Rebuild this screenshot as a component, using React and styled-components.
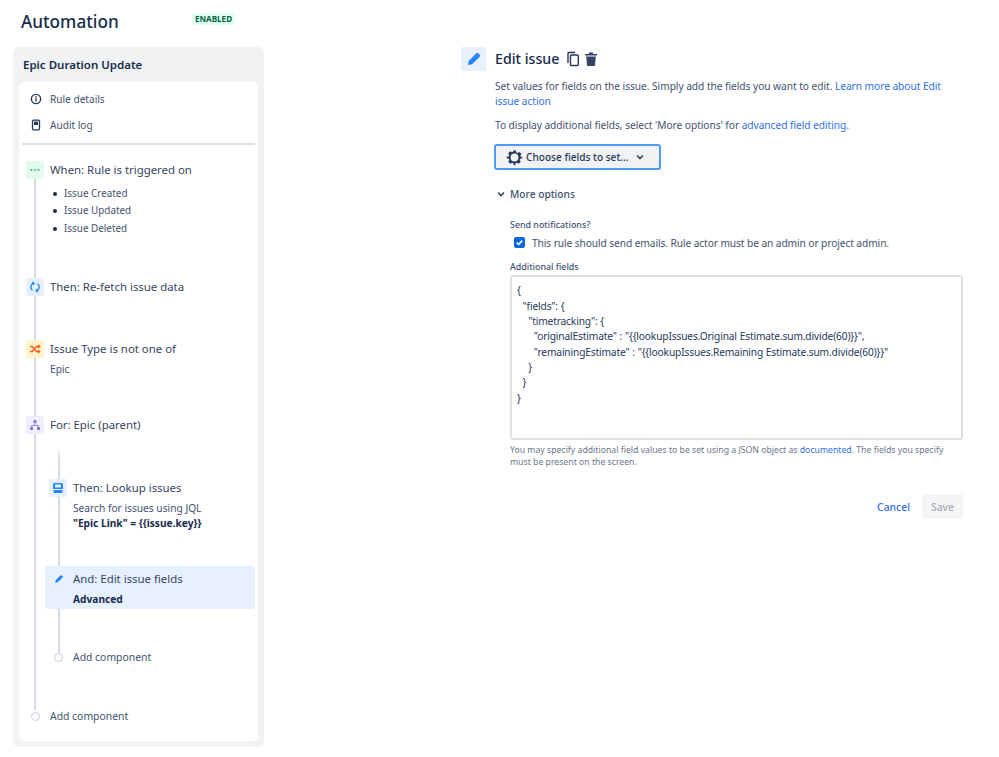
import React from "react";
import styled, { createGlobalStyle } from "styled-components";

const Global = createGlobalStyle`
  html, body { margin: 0; padding: 0; background: #fff; }
  body { font-family: "Noto Sans", "Open Sans", sans-serif; color: #172b4d; overflow: hidden; }
  * { box-sizing: border-box; }
`;

const Page = styled.div`
  width: 999px; height: 757px; padding: 0 36px 0 13px;
  display: grid; grid-template-columns: 251px 1fr; column-gap: 197px;
`;
const LeftCol = styled.div`display: flex; flex-direction: column;`;
const Header = styled.div`
  height: 47px; display: flex; align-items: flex-start; padding: 10px 0 0 8px;
`;
const H1 = styled.h1`
  margin: 0; font-size: 17.2px; line-height: 24px; font-weight: 500; color: #172b4d; width: 171px;
`;
const Badge = styled.span`
  margin-top: 3px; height: 12px; padding: 0 3px; border-radius: 3px; background: #e3fcef; color: #006644;
  font-size: 8.1px; line-height: 12px; font-weight: 700;
`;
const Panel = styled.div`
  width: 251px; height: 700px; background: #f1f2f4; border-radius: 6px; padding: 0 6px 6px;
  display: flex; flex-direction: column;
`;
const PanelTitle = styled.div`
  height: 35px; padding: 9px 0 0 4px; font-size: 11.5px; line-height: 17px; font-weight: 600; color: #172b4d;
`;
const Inner = styled.div`
  flex: 1; background: #fff; border-radius: 5px; padding: 4px 3px 0;
`;
const NavRow = styled.div`
  height: 26px; display: flex; align-items: center; gap: 8px; padding-left: 8px;
  font-size: 10.1px; color: #42526e;
  svg { flex: none; }
`;
const Divider = styled.div`height: 2px; background: #dfe1e6; margin: 5px 0 0;`;
const Timeline = styled.div`
  position: relative; padding-top: 16px;
  &::before {
    content: ""; position: absolute; left: 12px; top: 34px; height: 531px; width: 1.5px; background: #d5d9e2;
  }
`;
const Step = styled.div`
  position: relative; display: flex; gap: 6px; padding-left: 4px; min-height: ${p => p.$h}px;
`;
const IconBox = styled.div`
  flex: none; width: 18px; height: 18px; border-radius: 2px; background: ${p => p.$bg};
  display: flex; align-items: center; justify-content: center;
`;
const StepBody = styled.div`display: flex; flex-direction: column; min-width: 0;`;
const StepTitle = styled.div`
  font-size: 11.4px; line-height: 18px; color: #344563; white-space: nowrap;
`;
const Items = styled.ul`
  margin: 6px 0 0; padding: 0 0 0 3px; list-style: none; font-size: 9.9px; line-height: 17.4px; color: #42526e;
`;
const Item = styled.li`
  display: flex; align-items: center; gap: 7px;
  &::before { content: ""; width: 4px; height: 4px; border-radius: 50%; background: #172b4d; }
`;
const SubText = styled.div`
  font-size: 10.2px; line-height: 15px; color: #42526e; margin-top: ${p => p.$mt || 0}px;
`;
const Strong = styled.div`font-size: 10.2px; line-height: 15px; font-weight: 700; color: #172b4d;`;
const Nested = styled.div`
  position: relative; margin-left: 26px; padding-top: 45px; height: 239px;
  &::before {
    content: ""; position: absolute; left: 10px; top: 13px; height: 208px; width: 1.5px;
    background: linear-gradient(to bottom, #fff, #d5d9e2 14px);
  }
`;
const NestedStep = styled(Step)`padding-left: 0; margin-left: 1px;`;
const Selected = styled.div`
  position: relative; width: 210px; height: 43px; margin: 0 0 0 -3px; padding-left: 28px;
  background: #e6f0ff; border-radius: 3px;
  svg { position: absolute; left: 9px; top: 8px; }
`;
const SelectedTitle = styled(StepTitle)`padding-top: 4px; height: 26px;`;
const AddRow = styled.div`
  position: relative; display: flex; align-items: center; gap: ${p => p.$gap}px;
  font-size: 10.4px; line-height: 14px; color: #42526e;
  margin-top: ${p => p.$mt}px; margin-left: ${p => p.$ml}px;
`;
const Dot = styled.span`
  flex: none; width: 9px; height: 9px; border-radius: 50%; border: 1.5px solid #c9ced8; background: #fff;
`;

const RightCol = styled.div`padding-top: 47px; display: flex; flex-direction: column;`;
const TitleRow = styled.div`display: flex; align-items: center; height: 24px;`;
const BigIcon = styled.div`
  width: 25px; height: 24px; border-radius: 2px; background: #e6f0ff; margin-right: 9px;
  display: flex; align-items: center; justify-content: center;
`;
const H2 = styled.h2`
  margin: 0 7px 0 0; font-size: 14.2px; font-weight: 500; line-height: 24px; color: #172b4d; white-space: nowrap;
`;
const Content = styled.div`padding-left: 34px; display: flex; flex-direction: column;`;
const Para = styled.p`
  margin: ${p => p.$mt}px 0 0; font-size: 10.2px; line-height: 15.4px; letter-spacing: -0.05px; color: #42526e;
`;
const A = styled.a`color: #2f6fe4; text-decoration: none;`;
const ChooseBtn = styled.button`
  margin: 11px 0 0 -1px; width: 167px; height: 26px; background: #f1f2f4; border: 2px solid #4c9aff; border-radius: 3px;
  display: flex; align-items: center; gap: 3px; padding: 0 0 0 10px;
  font-family: inherit; font-size: 10.1px; font-weight: 500; color: #253858; white-space: nowrap;
`;
const MoreRow = styled.div`
  display: flex; align-items: center; gap: 4px; margin-top: 16px; height: 16px; padding-left: 1px;
  font-size: 10.2px; font-weight: 500; color: #42526e;
`;
const Form = styled.div`padding-left: 15px; display: flex; flex-direction: column;`;
const Label = styled.div`
  font-size: 8.9px; line-height: 12px; font-weight: 500; color: #42526e; margin-top: ${p => p.$mt}px;
`;
const CheckRow = styled.div`
  display: flex; align-items: center; gap: 7px; padding-left: 4px; margin-top: 4px; height: 15px;
  font-size: 10.2px; letter-spacing: -0.09px; color: #42526e; white-space: nowrap;
`;
const Box = styled.span`
  width: 11px; height: 11px; border-radius: 2px; background: #0c66e4; display: flex; align-items: center; justify-content: center;
`;
const Code = styled.div`
  margin-top: 2px; width: 453px; height: 165px; border: 2px solid #dfe1e6; border-radius: 3px;
  padding: 6px 5px; font-size: 10.2px; line-height: 15.35px; letter-spacing: -0.15px; word-spacing: 0.3px; color: #253858; white-space: pre;
`;
const Help = styled.div`
  margin-top: 5px; width: 453px; font-size: 8.7px; line-height: 11.5px; color: #6b778c;
`;
const Actions = styled.div`
  margin-top: 26px; width: 453px; display: flex; justify-content: flex-end; align-items: center; gap: 12px;
`;
const Cancel = styled.span`font-size: 10.4px; font-weight: 500; color: #2f6fe4;`;
const Save = styled.button`
  width: 41px; height: 25px; border: 0; border-radius: 3px; background: #f4f5f7; color: #a5adba;
  font-family: inherit; font-size: 10.4px; font-weight: 500; padding: 0;
`;
const ChevronWrap = styled.span`display: flex; margin-left: 4px;`;
const TrashIcon = styled.svg`margin-left: 4px;`;

const Pencil = ({ s = 12 }) => (
  <svg width={s} height={s} viewBox="0 0 24 24" fill="#2684ff">
    <path d="M3 21l1-6L15.5 3.500a2.100 2.100 0 0 1 3 0l2 2a2.100 2.100 0 0 1 0 3L9 20z" />
  </svg>
);
const Chevron = ({ s = 10, c = "#344563" }) => (
  <svg width={s} height={s} viewBox="0 0 10 10" fill="none" stroke={c} strokeWidth="1.6">
    <path d="M2 3.500L5 6.500L8 3.500" />
  </svg>
);

const code = `{
  "fields": {
    "timetracking": {
      "originalEstimate" : "{{lookupIssues.Original Estimate.sum.divide(60)}}",
      "remainingEstimate" : "{{lookupIssues.Remaining Estimate.sum.divide(60)}}"
    }
  }
}`;

export default function App() {
  return (
    <Page>
      <Global />
      <LeftCol>
        <Header>
          <H1>Automation</H1>
          <Badge>ENABLED</Badge>
        </Header>
        <Panel>
          <PanelTitle>Epic Duration Update</PanelTitle>
          <Inner>
            <NavRow>
              <svg width="12" height="12" viewBox="0 0 12 12" fill="none">
                <circle cx="6" cy="6" r="4.600" stroke="#253858" strokeWidth="1.400" />
                <rect x="5.300" y="5.200" width="1.400" height="3.200" fill="#253858" />
                <rect x="5.300" y="3.200" width="1.400" height="1.300" fill="#253858" />
              </svg>
              Rule details
            </NavRow>
            <NavRow>
              <svg width="12" height="12" viewBox="0 0 12 12" fill="none">
                <rect x="2.500" y="1.200" width="7" height="9.600" rx="1" stroke="#253858" strokeWidth="1.300" />
                <rect x="4" y="2.600" width="4" height="3.400" fill="#253858" />
              </svg>
              Audit log
            </NavRow>
            <Divider />
            <Timeline>
              <Step $h={117}>
                <IconBox $bg="#e3fcef">
                  <svg width="12" height="4" viewBox="0 0 12 4" fill="#36b37e">
                    <circle cx="2.500" cy="2" r="1" /><circle cx="6" cy="2" r="1" /><circle cx="9.500" cy="2" r="1" />
                  </svg>
                </IconBox>
                <StepBody>
                  <StepTitle>When: Rule is triggered on</StepTitle>
                  <Items>
                    <Item>Issue Created</Item>
                    <Item>Issue Updated</Item>
                    <Item>Issue Deleted</Item>
                  </Items>
                </StepBody>
              </Step>
              <Step $h={62}>
                <IconBox $bg="#e6f0ff">
                  <svg width="12" height="12" viewBox="0 0 12 12" fill="none" stroke="#2684ff" strokeWidth="1.400">
                    <path d="M3.500 9.300A4 4 0 0 1 3 3.200L4.600 2.300" />
                    <path d="M8.500 2.700A4 4 0 0 1 9 8.800L7.400 9.700" />
                    <path d="M3.200 1.200L5 2.300L4 4" />
                    <path d="M8.800 10.800L7 9.700L8 8" />
                  </svg>
                </IconBox>
                <StepTitle>Then: Re-fetch issue data</StepTitle>
              </Step>
              <Step $h={76}>
                <IconBox $bg="#fff4cc">
                  <svg width="12" height="12" viewBox="0 0 12 12" fill="none" stroke="#ff5c1a" strokeWidth="1.300">
                    <path d="M1 3.500H3.200L7.500 8.500H10.500" />
                    <path d="M1 8.500H3.200L7.500 3.500H10.500" />
                    <path d="M9 2L10.800 3.500L9 5" />
                    <path d="M9 7L10.800 8.500L9 10" />
                  </svg>
                </IconBox>
                <StepBody>
                  <StepTitle>Issue Type is not one of</StepTitle>
                  <SubText $mt={4}>Epic</SubText>
                </StepBody>
              </Step>
              <Step $h={18}>
                <IconBox $bg="#f1edff">
                  <svg width="12" height="12" viewBox="0 0 12 12" fill="#8777d9">
                    <rect x="4.500" y="1" width="3" height="3" rx=".5" />
                    <rect x="1" y="8" width="3" height="3" rx=".5" />
                    <rect x="8" y="8" width="3" height="3" rx=".5" />
                    <path d="M5.600 4h.8v2h3.200v2h-.8V6.800H3.200V8h-.8V6h3.200z" />
                  </svg>
                </IconBox>
                <StepTitle>For: Epic (parent)</StepTitle>
              </Step>
              <Nested>
                <NestedStep $h={87}>
                  <IconBox $bg="#e6f0ff">
                    <svg width="12" height="12" viewBox="0 0 12 12" fill="#2684ff">
                      <path d="M2.500 1h7A1.500 1.500 0 0 1 11 2.500V7H1V2.500A1.500 1.500 0 0 1 2.500 1z" />
                      <rect x="3" y="2.500" width="6" height="3" fill="#e6f0ff" />
                      <rect x="1.500" y="8" width="9" height="3" rx="1" />
                    </svg>
                  </IconBox>
                  <StepBody>
                    <StepTitle>Then: Lookup issues</StepTitle>
                    <SubText $mt={4}>Search for issues using JQL</SubText>
                    <Strong>"Epic Link" = {"{{issue.key}}"}</Strong>
                  </StepBody>
                </NestedStep>
                <Selected>
                  <Pencil s={10} />
                  <SelectedTitle>And: Edit issue fields</SelectedTitle>
                  <Strong>Advanced</Strong>
                </Selected>
                <AddRow $mt={41} $ml={6} $gap={10}>
                  <Dot />
                  Add component
                </AddRow>
              </Nested>
              <AddRow $mt={36} $ml={9} $gap={10}>
                <Dot />
                Add component
              </AddRow>
            </Timeline>
          </Inner>
        </Panel>
      </LeftCol>
      <RightCol>
        <TitleRow>
          <BigIcon><Pencil s={16} /></BigIcon>
          <H2>Edit issue</H2>
          <svg width="14" height="16" viewBox="0 0 14 16" fill="none" stroke="#253858" strokeWidth="1.400">
            <path d="M2 12V2.500A1 1 0 0 1 3 1.500H9" />
            <rect x="4.500" y="4" width="7.800" height="10.500" rx="1" />
          </svg>
          <TrashIcon width="14" height="16" viewBox="0 0 14 16" fill="#344563">
            <path d="M1 3h12v1.600H1zM5 1.500h4V3H5zM2.200 5.500h9.600l-.8 8.500a1 1 0 0 1-1 .9H4a1 1 0 0 1-1-.9z" />
          </TrashIcon>
        </TitleRow>
        <Content>
          <Para $mt={8}>
            Set values for fields on the issue. Simply add the fields you want to edit. <A>Learn more about Edit issue action</A>
          </Para>
          <Para $mt={8}>
            To display additional fields, select 'More options' for <A>advanced field editing.</A>
          </Para>
          <ChooseBtn>
            <svg width="17" height="17" viewBox="0 0 24 24" fill="#253858">
              <path fillRule="evenodd" d="M10 2h4l.6 2.800 1.900.8 2.400-1.500 2.900 2.900-1.500 2.400.8 1.900L23 11v2l-2.900.6-.8 1.900 1.500 2.400-2.900 2.900-2.400-1.500-1.900.8L13 23h-2l-.6-2.800-1.900-.8-2.400 1.500-2.900-2.900 1.500-2.400-.8-1.900L1 13v-2l2.800-.6.8-1.900-1.500-2.400 2.900-2.900 2.400 1.500 1.900-.8zM12 6.500a5.500 5.500 0 1 0 0 11 5.500 5.500 0 0 0 0-11z" />
            </svg>
            <span>Choose fields to set...</span>
            <ChevronWrap><Chevron /></ChevronWrap>
          </ChooseBtn>
          <MoreRow>
            <Chevron />
            More options
          </MoreRow>
          <Form>
            <Label $mt={17}>Send notifications?</Label>
            <CheckRow>
              <Box>
                <svg width="9" height="9" viewBox="0 0 9 9" fill="none" stroke="#fff" strokeWidth="1.600">
                  <path d="M1.800 4.600L3.700 6.400L7.200 2.600" />
                </svg>
              </Box>
              This rule should send emails. Rule actor must be an admin or project admin.
            </CheckRow>
            <Label $mt={11}>Additional fields</Label>
            <Code>{code}</Code>
            <Help>
              You may specify additional field values to be set using a JSON object as <A>documented</A>. The fields you specify must be present on the screen.
            </Help>
            <Actions>
              <Cancel>Cancel</Cancel>
              <Save>Save</Save>
            </Actions>
          </Form>
        </Content>
      </RightCol>
    </Page>
  );
}
